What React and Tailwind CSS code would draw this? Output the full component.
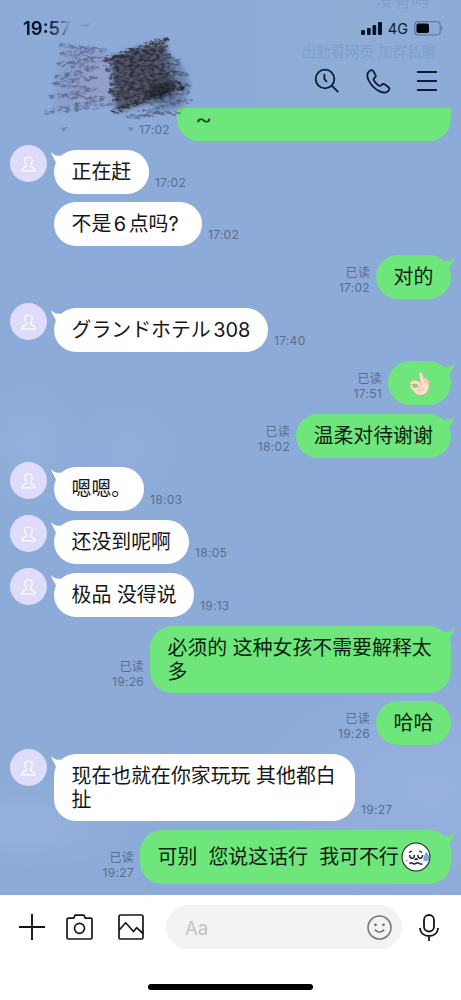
import React from 'react';
import clsx from 'clsx';

const messages = [
  { side: 'left', time: '17:02', text: '正在赶', size: 'w-[95px] h-[44px]', gap: 'mt-[9px]', first: true },
  { side: 'left', time: '17:02', text: <>不是<span className="mx-[2.5px]">6</span>点吗?</>, size: 'w-[148px] h-[44px]', gap: 'mt-[8px]' },
  { side: 'right', time: '17:02', text: '对的', size: 'w-[75px] h-[44px]', gap: 'mt-[9px]', first: true },
  { side: 'left', time: '17:40', text: <>グランドホテル<span className="ml-[2.5px]">308</span></>, size: 'w-[214px] h-[44px]', gap: 'mt-[9px]', first: true },
  { side: 'right', time: '17:51', text: <OkHand />, size: 'w-[63px] h-[44px]', gap: 'mt-[9px]', first: true },
  { side: 'right', time: '18:02', text: '温柔对待谢谢', size: 'w-[155px] h-[44px]', gap: 'mt-[9px]', first: true },
  { side: 'left', time: '18:03', text: '嗯嗯。', size: 'w-[90px] h-[44px]', gap: 'mt-[9px]', first: true },
  { side: 'left', time: '18:05', text: '还没到呢啊', size: 'w-[135px] h-[44px]', gap: 'mt-[9px]', first: true },
  { side: 'left', time: '19:13', text: '极品 没得说', size: 'w-[140px] h-[44px]', gap: 'mt-[9px]', first: true },
  { side: 'right', time: '19:26', text: '必须的 这种女孩不需要解释太\n多', size: 'w-[301px] h-[67px]', gap: 'mt-[9px]', first: true },
  { side: 'right', time: '19:26', text: '哈哈', size: 'w-[75px] h-[44px]', gap: 'mt-[8px]' },
  { side: 'left', time: '19:27', text: '现在也就在你家玩玩 其他都白\n扯', size: 'w-[301px] h-[67px]', gap: 'mt-[9px]', first: true },
  { side: 'right', time: '19:27', text: <>可别{'  '}您说这话行{'  '}我可不行<CryFace /></>, size: 'w-[311px] h-[54px]', gap: 'mt-[9px]', first: true },
];

function OkHand() {
  return (
    <svg className="-mt-[2px] ml-[3px] h-[25px] w-[21px]" viewBox="0 0 20 24">
      <path
        d="M1.2 10.5c2.600-2.300 6.200-1.900 8.600.4l1.300-.3L9.800 2.800C9.500.8 11.900.2 12.400 2.200l1.700 4.700c1.400-.5 2.500 0 2.900 1.500 1.300 0 2 .8 2 2.300.3 3.600-.1 7.100-1.800 9.400-2.300 3.200-6.700 3.800-9.900 2.200-2-1.200-3.700-3.600-5.900-6.200-1.300-1.700-.5-3 .9-3-1.100-.5-1.900-1.500-1.100-2.600Z"
        fill="#fbe0cd"
        stroke="#e0b193"
        strokeWidth=".6"
      />
      <path d="M3.7 12.8c2-.8 4.200-.1 5 1.500-.8 1.500-3 2-4.800 1.100-1-.7-1-1.900-.2-2.600Z" fill="#6ee67b" stroke="#d99b7a" strokeWidth=".8" />
      <path d="M11.1 10.7c1.400 1.900.3 4.500-2.600 5.900M14.100 7l.8 4.500M17 8.500l.1 4.200M7.500 18.500c2.500 1.200 5.700.1 6.800-2.100" fill="none" stroke="#dda98a" strokeWidth=".7" />
    </svg>
  );
}

function CryFace() {
  return (
    <svg className="-mt-[2px] ml-[2px] h-[30px] w-[30px] shrink-0" viewBox="0 0 31 31">
      <circle cx="15.5" cy="15.5" r="14.4" fill="#fff" stroke="#202522" strokeWidth="1.1" />
      <path d="M8.2 11c1-.9 1.800-1.400 3-1.600M18.800 9.400c1.200.2 2 .7 3 1.600" fill="none" stroke="#222" strokeWidth="1.2" />
      <path d="M9 13.500c.1 4.700 4.700 4.700 4.900 0M17.400 13.500c.1 4.700 4.700 4.700 4.900 0M14 18.500l1.600-1.300 1.600 1.300" fill="none" stroke="#222" strokeWidth="1.5" />
      <path d="M8.700 22.500q1.700-1.700 3.400-.4t3.400 0 3.400 0 3.400.4" fill="none" stroke="#222" strokeWidth="1.5" />
      <path d="M26.200 10.800c2 3.300 3.200 5.100 2.700 6.900-.8 2.400-4.700 2.300-5.200-.1-.3-1.800 1.400-3.900 2.500-6.800Z" fill="#6bb0ea" stroke="#3679b8" strokeWidth=".7" />
      <path d="M4.300 19.200h3.200M22.500 19.500h2.500" stroke="#f3a2a5" strokeWidth="1.2" />
    </svg>
  );
}

function Avatar() {
  return (
    <div className="-mt-[5px] flex h-[37px] w-[37px] shrink-0 items-center justify-center rounded-full bg-[#dfdbfa]">
      <svg className="h-[16px] w-[15px]" viewBox="0 0 15 16" fill="none" stroke="#fff" strokeWidth="1.2" strokeLinejoin="round">
        <path d="M5.6 9.2C4.4 8 3.7 6.4 3.7 4.8 3.7 2.4 5.3 1 7.5 1s3.8 1.4 3.8 3.8c0 1.6-.7 3.2-1.9 4.4-.2 1 .4 1.4 1.4 1.8 2.1.8 3.3 1.5 3.4 3.9H.8c.1-2.4 1.3-3.1 3.4-3.9 1-.4 1.6-.8 1.4-1.8Z" />
      </svg>
    </div>
  );
}

function Tail({ side }) {
  const left = side === 'left';
  return (
    <svg
      className={clsx('absolute top-[2px] h-[14px] w-[16px]', left ? '-left-[3px] text-white' : '-right-[4px] -scale-x-100 text-[#6ee67b]')}
      viewBox="0 0 16 14"
    >
      <path d="M0 0C2.5 2.8 5.5 4.300 9.500 3.400L15 8 5 12C5 8.200 1.500 5.600 0 0Z" fill="currentColor" />
    </svg>
  );
}

function Message({ side, time, text, size, gap, first }) {
  const left = side === 'left';
  return (
    <div className={clsx('flex shrink-0', gap, left ? 'pl-[10px]' : 'flex-row-reverse pr-[10px]')}>
      {left && (first ? <Avatar /> : <div className="w-[37px] shrink-0" />)}
      <div
        className={clsx(
          'relative flex shrink-0 items-center whitespace-pre rounded-[22px] px-[17.5px] pt-[2px] text-[19.9px] leading-[23.5px]',
          size,
          left ? 'ml-[7px] bg-white text-[#161616]' : 'bg-[#6ee67b] text-[#0b1f10]'
        )}
      >
        {first && <Tail side={side} />}
        {text}
      </div>
      <div
        className={clsx(
          'flex flex-col justify-end pb-[4px] text-[12px] leading-[15px] tracking-[0.3px] text-[#596b8c]',
          left ? 'pl-[6px]' : 'items-end pr-[6px]'
        )}
      >
        {!left && <span className="tracking-[0.2px]">已读</span>}
        <span>{time}</span>
      </div>
    </div>
  );
}

// Crayon strokes that cover the contact name
function Scribble() {
  return (
    <svg className="absolute left-[30px] top-[15px] h-[120px] w-[175px]" viewBox="30 15 175 120">
      <defs>
        <filter id="crayon" x="-5%" y="-5%" width="110%" height="110%">
          <feTurbulence type="fractalNoise" baseFrequency=".2 .34" numOctaves="3" seed="8" result="noise" />
          <feDisplacementMap in="SourceGraphic" in2="noise" scale="5" result="rough" />
          <feColorMatrix in="noise" type="matrix" values="0 0 0 0 0  0 0 0 0 0  0 0 0 0 0  0 3.5 0 0 -1.25" result="grain" />
          <feComposite in="rough" in2="grain" operator="in" />
          <feGaussianBlur stdDeviation=".7" />
        </filter>
        <filter id="soft"><feGaussianBlur stdDeviation="2.5" /></filter>
      </defs>
      <path d="M62 47L108 51 112 104 52 110 55 84Z" fill="#8792bd" opacity=".5" filter="url(#soft)" />
      <path d="M80 62L110 56 112 102 74 106Z" fill="#a09fc6" opacity=".55" filter="url(#soft)" />
      <path d="M111 57L164 40 169 58 175 96 116 112Z" fill="#464a5c" opacity=".85" filter="url(#soft)" />
      <path d="M166 52L183 66 190 85 182 108 150 112 166 88Z" fill="#5c6f97" opacity=".6" filter="url(#soft)" />
      <g filter="url(#crayon)" fill="none" strokeLinejoin="round">
        <path d="M58 45L105 50 62 54 100 60 59 64 98 68 56 77 96 78 54 84 98 90 50 96 108 98 46 113 112 104" stroke="#465274" strokeWidth="4" opacity=".6" />
        <path d="M102 61L166 40 111 62 166 48 108 69 168 56 111 77 172 65 112 85 175 73 111 92 178 83 114 99 181 88 111 112" stroke="#2c2b31" strokeWidth="6" opacity=".85" />
        <path d="M168 58L182 62 165 70 187 74 168 80 190 86 168 94 188 92 150 103 191 100 140 112 179 113 126 117" stroke="#37425d" strokeWidth="3.5" opacity=".6" />
      </g>
      <path d="M113 57Q142 52 165 40M113 112Q145 97 186 86" fill="none" stroke="#22252e" strokeWidth="2.5" opacity=".8" filter="url(#crayon)" />
      <path d="M146 96L152 85 172 80 180 86 160 97Z" fill="#171719" opacity=".6" filter="url(#soft)" />
      <path d="M61 128l7-1-5 5ZM128 127l6 1-4 4Z" fill="#66769c" opacity=".65" />
      <path d="M78 26l12-3-3 4" fill="#758ab5" opacity=".55" />
    </svg>
  );
}

function Header() {
  return (
    <header className="relative h-[108px] shrink-0">
      <div className="absolute right-0 top-0 h-[107px] w-[230px] bg-linear-to-r from-transparent via-[#8dafd4]/70 to-[#8dabd8]" />
      <div className="absolute -top-[10px] left-[375px] text-[18px] leading-[22px] text-[#7798c3]/60">没有吗</div>
      <div className="absolute left-[246px] top-[42px] w-[190px] text-right text-[14.5px] leading-[20px] text-[#7297c5]/60">
        出勤看网页 加群私聊
      </div>
      <div className="relative z-10 flex h-[56px] items-center justify-between pl-[23px] pr-[18px]">
        <div className="bg-linear-to-r from-[#071225] from-50% to-[#8dabd9] bg-clip-text text-[18.5px] font-semibold leading-[24px] text-transparent">19:57</div>
        <div className="flex items-center">
          <svg className="mr-[6px] h-[13px] w-[21px]" viewBox="0 0 21 13" fill="#071225">
            <rect x="0" y="8" width="4" height="5" rx="1" />
            <rect x="6" y="6" width="3.7" height="7" rx="1" />
            <rect x="11.5" y="3" width="3.7" height="10" rx="1" />
            <rect x="17" y="0" width="4" height="13" rx="1" />
          </svg>
          <span className="mr-[6px] mt-[2px] text-[14.5px] leading-[20px] text-[#0c1b31]">4G</span>
          <svg className="h-[15px] w-[29px]" viewBox="0 0 29 15">
            <rect x=".7" y=".7" width="25.5" height="13.2" rx="3.5" fill="none" stroke="#6078a0" strokeWidth="1.2" />
            <rect x="2.5" y="2.5" width="12.5" height="9.6" rx="1.8" fill="#02060c" />
            <path d="M27.5 5q1.800 2.200 0 4.500Z" fill="#46628e" />
          </svg>
        </div>
      </div>
      <div className="relative flex h-[50px] items-center justify-end gap-[26px] pr-[24px] text-[#0b1c36]">
        <svg className="h-[26px] w-[26px]" viewBox="0 0 26 26" fill="none" stroke="currentColor" strokeWidth="1.8">
          <circle cx="11" cy="11" r="9.3" />
          <path d="M17.7 17.700l6.600 6.500M10.400 6v5.100l2.500 2.800" />
        </svg>
        <svg className="h-[25px] w-[25px]" viewBox="0 0 25 25" fill="none" stroke="currentColor" strokeWidth="1.8" strokeLinejoin="round">
          <path d="M3.6 1.9C1.200 3.800.8 7 2.300 10.500c2.300 5.200 6.200 9.300 11.400 11.900 3.600 1.700 7.200 1.500 9-.9 1.200-1.500.8-2.700-.7-3.800l-3-2.100c-1.400-1-2.600-.7-3.500.4-.9 1.100-1.700 1.400-3.200.3-1.600-1.200-3.100-2.800-4.200-4.500-.9-1.400-.5-2.200.6-3 1.200-.9 1.400-1.900.6-3.200L7.500 2.500C6.500 1 5.100.8 3.600 1.900Z" />
        </svg>
        <svg className="h-[20px] w-[20px]" viewBox="0 0 20 20" stroke="currentColor" strokeWidth="1.9">
          <path d="M0 1h20M0 10h20M0 19h20" />
        </svg>
      </div>
      <Scribble />
    </header>
  );
}

function Footer() {
  return (
    <footer className="flex h-[105px] shrink-0 flex-col bg-white text-[#171717]">
      <div className="flex h-[64px] items-center pl-[19px] pr-[22px]">
        <svg className="h-[26px] w-[26px]" viewBox="0 0 26 26" stroke="currentColor" strokeWidth="1.9">
          <path d="M13 0v26M0 13h26" />
        </svg>
        <svg className="ml-[21px] h-[26px] w-[27px]" viewBox="0 0 27 26" fill="none" stroke="currentColor" strokeWidth="1.7" strokeLinejoin="round">
          <path d="M2.5 4.200h5.200l1.400-3.100h8.800l1.400 3.100h5.200q1.500 0 1.500 1.500v17.700q0 1.600-1.500 1.600h-22Q1 25 1 23.400V5.700q0-1.500 1.500-1.500Z" />
          <circle cx="13.5" cy="14.3" r="5" />
        </svg>
        <svg className="ml-[25px] h-[26px] w-[26px]" viewBox="0 0 26 26" fill="none" stroke="currentColor" strokeWidth="1.7" strokeLinejoin="round">
          <rect x="1" y="1" width="24" height="24" rx="1.6" />
          <path d="M1 16.200l6.700-7.400 7.800 8.700 3.100-3.800L25 19.500" />
        </svg>
        <div className="ml-[22px] flex h-[44px] w-[236px] items-center justify-between rounded-full bg-[#f3f3f3] pl-[19px] pr-[10px]">
          <span className="mt-[2px] text-[18.5px] leading-[24px] text-[#c2c2c2]">Aa</span>
          <svg className="h-[25px] w-[25px]" viewBox="0 0 25 25" fill="none" stroke="#777" strokeWidth="1.6">
            <circle cx="12.5" cy="12.5" r="11.5" />
            <path d="M7.800 14.600q4.700 5.400 9.400 0" />
            <circle cx="8.5" cy="9.8" r="1.4" fill="#777" stroke="none" />
            <circle cx="16.5" cy="9.8" r="1.4" fill="#777" stroke="none" />
          </svg>
        </div>
        <svg className="ml-[17px] h-[27px] w-[20px]" viewBox="0 0 20 27" fill="none" stroke="currentColor" strokeWidth="1.8">
          <rect x="5" y="1" width="10" height="16.5" rx="5" />
          <path d="M.9 14c.4 5 4 8 9.100 8s8.700-3 9.100-8M10 22v5" />
        </svg>
      </div>
      <div className="mx-auto mt-[25px] h-[6px] w-[165px] rounded-full bg-black" />
    </footer>
  );
}

export default function App() {
  return (
    <div className="flex h-[1000px] w-[461px] flex-col overflow-hidden bg-[#8dabd9] bg-[radial-gradient(ellipse_55px_65px_at_30px_445px,#94b0db,transparent),radial-gradient(ellipse_55px_50px_at_125px_450px,#92aedb,transparent),radial-gradient(ellipse_180px_110px_at_430px_790px,#98b1dd,transparent),radial-gradient(ellipse_110px_45px_at_25px_825px,#96b1db,transparent)] font-['Inter','Noto_Sans_CJK_SC',sans-serif]">
      <Header />
      <main className="flex flex-1 flex-col">
        <div className="flex h-[33px] shrink-0 flex-row-reverse pr-[10px]">
          <div className="h-[33px] w-[274px] rounded-b-[22px] bg-[#6ee67b] pl-[18px]">
            <span className="inline-block origin-left scale-x-140 text-[19px] leading-[16px] text-[#174a24]">~</span>
          </div>
          <span className="pr-[7px] pt-[14px] text-[12px] leading-[15px] tracking-[0.3px] text-[#596b8c]">17:02</span>
        </div>
        {messages.map((message, i) => (
          <Message key={i} {...message} />
        ))}
      </main>
      <Footer />
    </div>
  );
}
